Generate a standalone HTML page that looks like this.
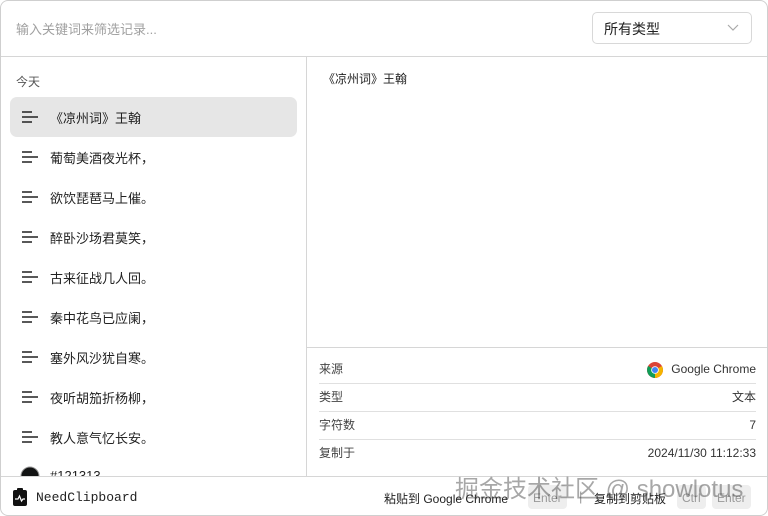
<!DOCTYPE html>
<html><head><meta charset="utf-8"><style>
*{box-sizing:border-box;margin:0;padding:0}
body{width:768px;height:516px;background:#fff;font-family:"Liberation Sans","Noto Sans CJK SC",sans-serif;font-size:13px;color:#222;overflow:hidden;position:relative}
.win{position:absolute;left:0;top:0;width:768px;height:516px;overflow:hidden}
.frame{position:absolute;left:0;top:0;width:768px;height:516px;border:1px solid #cfcfcf;border-radius:8px;pointer-events:none}
.hdr{position:absolute;left:0;top:0;width:768px;height:57px;border-bottom:1px solid #d6d6d6}
.ph{position:absolute;left:16px;top:19px;color:#a0a0a0;font-size:13px}
.sel{position:absolute;left:592px;top:12px;width:160px;height:32px;border:1px solid #d8d8d8;border-radius:5px}
.sel span{position:absolute;left:11px;top:6px;font-size:14px}
.sel svg{position:absolute;right:12px;top:11px}
.left{position:absolute;left:0;top:57px;width:307px;height:419px;border-right:1px solid #d6d6d6;overflow:hidden}
.day{position:absolute;left:16px;top:16px;color:#555;font-size:12px}
.it{position:absolute;left:10px;width:287px;height:40px;border-radius:7px}
.it.a{background:#e6e6e6}
.it .ic{position:absolute;left:12px;top:14px}
.it span{position:absolute;left:40px;top:11px;font-size:13px}
.right{position:absolute;left:307px;top:57px;width:461px;height:419px}
.rt{position:absolute;left:16px;top:13px;font-size:12px}
.det{position:absolute;left:0;top:290px;width:461px;border-top:1px solid #d6d6d6}
.row{position:absolute;left:12px;width:437px;height:28px;border-bottom:1px solid #e0e0e0;font-size:12px;color:#444;line-height:27px}
.row .k{position:absolute;left:0;top:0}
.row .v{position:absolute;right:0;top:0;color:#333}
.foot{position:absolute;left:0;top:476px;width:768px;height:40px;border-top:1px solid #d6d6d6}
.nc{position:absolute;left:36px;top:13px;font-family:"Liberation Mono",monospace;font-size:13px}
.kb{position:absolute;top:8px;height:24px;background:#eee;border-radius:4px;font-size:12px;color:#999;padding:6px 5px 0}
.wm{position:absolute;left:455px;top:469px;font-size:24px;color:rgba(60,60,60,.45);white-space:nowrap;font-family:"Liberation Sans","Noto Sans CJK SC",sans-serif}
</style></head><body><div class="win">
<div class="hdr"><div class="ph">输入关键词来筛选记录...</div>
<div class="sel"><span>所有类型</span><svg width="12" height="8" viewBox="0 0 12 8"><path d="M1 1l5 5 5-5" fill="none" stroke="#aaa" stroke-width="1.2"/></svg></div></div>
<div class="left"><div class="day">今天</div>
<div class="it a" style="top:40px"><svg class="ic" width="16" height="12"><path d="M0 1h10M0 6h16M0 11h10" stroke="#222" stroke-width="1.6"/></svg><span>《凉州词》王翰</span></div>
<div class="it" style="top:80px"><svg class="ic" width="16" height="12"><path d="M0 1h10M0 6h16M0 11h10" stroke="#222" stroke-width="1.6"/></svg><span>葡萄美酒夜光杯，</span></div>
<div class="it" style="top:120px"><svg class="ic" width="16" height="12"><path d="M0 1h10M0 6h16M0 11h10" stroke="#222" stroke-width="1.6"/></svg><span>欲饮琵琶马上催。</span></div>
<div class="it" style="top:160px"><svg class="ic" width="16" height="12"><path d="M0 1h10M0 6h16M0 11h10" stroke="#222" stroke-width="1.6"/></svg><span>醉卧沙场君莫笑，</span></div>
<div class="it" style="top:200px"><svg class="ic" width="16" height="12"><path d="M0 1h10M0 6h16M0 11h10" stroke="#222" stroke-width="1.6"/></svg><span>古来征战几人回。</span></div>
<div class="it" style="top:240px"><svg class="ic" width="16" height="12"><path d="M0 1h10M0 6h16M0 11h10" stroke="#222" stroke-width="1.6"/></svg><span>秦中花鸟已应阑，</span></div>
<div class="it" style="top:280px"><svg class="ic" width="16" height="12"><path d="M0 1h10M0 6h16M0 11h10" stroke="#222" stroke-width="1.6"/></svg><span>塞外风沙犹自寒。</span></div>
<div class="it" style="top:320px"><svg class="ic" width="16" height="12"><path d="M0 1h10M0 6h16M0 11h10" stroke="#222" stroke-width="1.6"/></svg><span>夜听胡笳折杨柳，</span></div>
<div class="it" style="top:360px"><svg class="ic" width="16" height="12"><path d="M0 1h10M0 6h16M0 11h10" stroke="#222" stroke-width="1.6"/></svg><span>教人意气忆长安。</span></div>
<div class="it" style="top:400px"><svg style="position:absolute;left:10px;top:9px" width="20" height="20"><circle cx="10" cy="10" r="9" fill="#121313" stroke="#999"/></svg><span>#121313</span></div>
</div>
<div class="right"><div class="rt">《凉州词》王翰</div>
<div class="det">
<div class="row" style="top:8px"><span class="k">来源</span><span class="v" style="padding-left:24px"><svg style="position:absolute;left:0;top:6px" width="16" height="16" viewBox="0 0 16 16"><circle cx="8" cy="8" r="8" fill="#db4437"/><path d="M8 8L1.1 4A8 8 0 0 0 8 16z" fill="#0f9d58"/><path d="M8 8L8 16A8 8 0 0 0 14.9 4z" fill="#f4b400"/><circle cx="8" cy="8" r="3.8" fill="#fff"/><circle cx="8" cy="8" r="3" fill="#4285f4"/></svg>Google Chrome</span></div>
<div class="row" style="top:36px"><span class="k">类型</span><span class="v">文本</span></div>
<div class="row" style="top:64px"><span class="k">字符数</span><span class="v">7</span></div>
<div class="row" style="top:92px;border:none"><span class="k">复制于</span><span class="v">2024/11/30 11:12:33</span></div>
</div></div>
<div class="foot">
<svg style="position:absolute;left:13px;top:11px" width="14" height="18" viewBox="0 0 14 18"><rect x="0" y="2" width="14" height="16" rx="2" fill="#111"/><rect x="4" y="0" width="6" height="4" rx="1" fill="#111"/><path d="M2 11h3l1.5-3 2 5 1.5-2h2" stroke="#fff" stroke-width="1.2" fill="none"/></svg>
<div class="nc">NeedClipboard</div>
<span style="position:absolute;left:384px;top:13px;font-size:12px">粘贴到 Google Chrome</span>
<div class="kb" style="left:528px">Enter</div>
<span style="position:absolute;left:579px;top:12px;color:#999">|</span>
<span style="position:absolute;left:594px;top:13px;font-size:12px">复制到剪贴板</span>
<div class="kb" style="left:677px">Ctrl</div>
<div class="kb" style="left:712px">Enter</div>
</div>
</div>
<div class="frame"></div>
<div class="wm">掘金技术社区 @ showlotus</div>
</body></html>
